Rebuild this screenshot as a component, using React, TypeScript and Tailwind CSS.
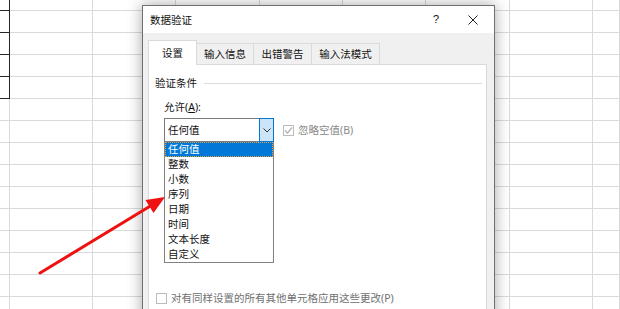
const colWidths = ['w-[10px]', 'w-[83px]', 'w-[83px]', 'w-[84px]', 'w-[83px]', 'w-[83px]', 'w-[84px]', 'w-[83px]', 'flex-1'];
const rows = Array.from({ length: 15 }, (_, i) => i);

const options = ['任何值', '整数', '小数', '序列', '日期', '时间', '文本长度', '自定义'];
const tabs = [
  { label: '设置', w: 'w-[49px]' },
  { label: '输入信息', w: 'w-[57px]' },
  { label: '出错警告', w: 'w-[58px]' },
  { label: '输入法模式', w: 'w-[68px]' },
];

function Sheet() {
  return (
    <div className="flex flex-col">
      {rows.map((r) => (
        <div key={r} className={r === 0 ? 'flex h-[11px]' : 'flex h-[22px]'}>
          {colWidths.map((w, c) => (
            <div
              key={c}
              className={
                c === 0 && r < 5
                  ? `${w} border-r border-b border-[#262626]`
                  : `${w} border-r border-b border-[#dadada]`
              }
            />
          ))}
        </div>
      ))}
    </div>
  );
}

function Arrow() {
  return (
    <svg className="absolute left-0 top-0" width="620" height="309" viewBox="0 0 620 309">
      <line x1="40" y1="273" x2="152" y2="205" stroke="#ee1111" strokeWidth="3" strokeLinecap="round" />
      <polygon points="165,197 153.5,213 145.5,200" fill="#ee1111" />
    </svg>
  );
}

function Dialog() {
  return (
    <div className="absolute left-[142px] top-[5px] w-[353px] h-[330px] border border-[#707070] bg-[#f0f0f0] shadow-[0_0_14px_rgba(0,0,0,0.35)] text-[10.5px] text-[#111]">
      <div className="h-[27px] bg-white flex items-center pl-[7px]">
        <span className="leading-[16px]">数据验证</span>
        <span className="ml-auto mr-[29px] text-[11px] font-['Liberation_Sans',sans-serif]">?</span>
        <svg className="mr-[16px]" width="10" height="10" viewBox="0 0 10 10">
          <path d="M0.5 0.5 L9.5 9.5 M9.5 0.5 L0.5 9.5" stroke="#222" strokeWidth="1" />
        </svg>
      </div>
      <div className="px-[5px] pt-[7px]">
        <div className="flex items-end h-[24px] relative z-10">
          {tabs.map((t, i) => (
            <div
              key={t.label}
              className={
                i === 0
                  ? `${t.w} h-[25px] -mb-px bg-white border border-b-0 border-[#dadada] flex items-center justify-center`
                  : `${t.w} h-[21px] bg-[#f0f0f0] border border-b-0 border-l-0 border-[#dadada] flex items-center justify-center`
              }
            >
              <span className="leading-[16px]">{t.label}</span>
            </div>
          ))}
        </div>
        <div className="w-[339px] h-[300px] bg-white border border-[#dadada] pt-[10px] px-[6px]">
          <div className="flex items-center">
            <span className="leading-[16px]">验证条件</span>
            <div className="flex-1 h-px bg-[#dcdcdc] ml-[7px] mr-[-2px]" />
          </div>
          <div className="pl-[9px]">
            <div className="mt-[8px] leading-[16px]">
              允许(<span className="underline">A</span>):
            </div>
            <div className="flex items-center mt-[3px]">
              <div className="flex w-[110px] h-[24px] border border-[#7a7a7a]">
                <div className="flex-1 flex items-center pl-[3px] leading-[16px]">任何值</div>
                <div className="w-[15px] -my-px -mr-px border border-[#0078d7] bg-[#cce4f7] flex items-center justify-center">
                  <svg width="8" height="5" viewBox="0 0 8 5">
                    <path d="M0.5 0.5 L4 4 L7.5 0.5" fill="none" stroke="#333" strokeWidth="1" />
                  </svg>
                </div>
              </div>
              <div className="ml-[9px] w-[11px] h-[11px] border border-[#bcbcbc] flex items-center justify-center">
                <svg width="9" height="9" viewBox="0 0 9 9">
                  <path d="M1 4.5 L3.5 7 L8 1.5" fill="none" stroke="#b0b0b0" strokeWidth="1.2" />
                </svg>
              </div>
              <span className="ml-[4px] leading-[16px] text-[#8a8a8a]">忽略空值(B)</span>
            </div>
            <div className="-mt-px w-[110px] border border-[#828282] bg-white">
              {options.map((o, i) => (
                <div
                  key={o}
                  className={
                    i === 0
                      ? 'h-[15px] flex items-center pl-[2px] bg-[#0078d7] text-white border border-dotted border-[#e8a040] leading-[15px]'
                      : 'h-[15px] flex items-center pl-[3px] leading-[15px]'
                  }
                >
                  {o}
                </div>
              ))}
            </div>
          </div>
          <div className="flex items-center mt-[27px] pl-[1px]">
            <div className="w-[11px] h-[11px] border border-[#bcbcbc] bg-white" />
            <span className="ml-[4px] leading-[16px] text-[#707070]">对有同样设置的所有其他单元格应用这些更改(P)</span>
          </div>
        </div>
      </div>
    </div>
  );
}

export default function App() {
  return (
    <div className="relative w-[620px] h-[309px] overflow-hidden bg-white font-['Noto_Sans','Noto_Sans_CJK_SC',sans-serif]">
      <Sheet />
      <Dialog />
      <Arrow />
    </div>
  );
}
